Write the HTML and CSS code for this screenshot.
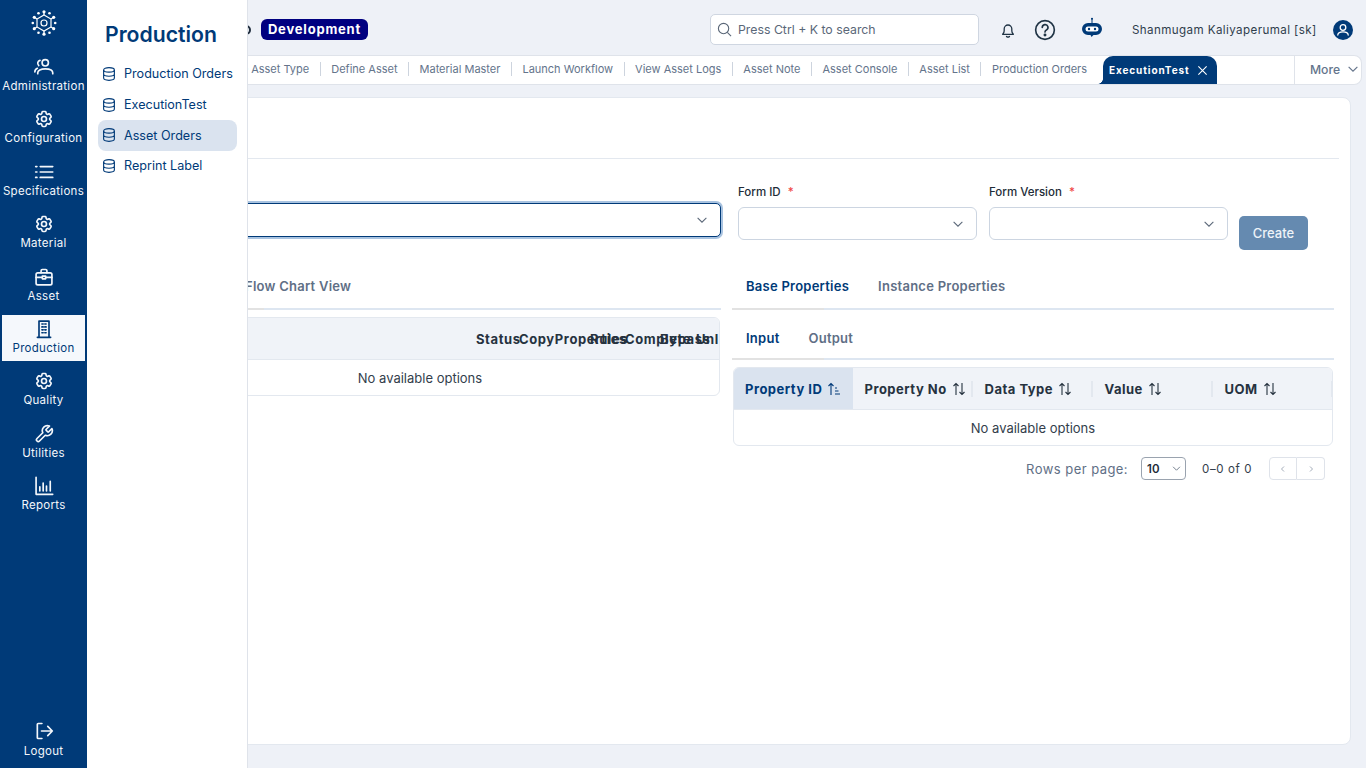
FILE: index.html
```html
<!DOCTYPE html>
<html lang="en">
<head>
<meta charset="utf-8">
<title>Asset Orders</title>
<link rel="stylesheet" href="styles.css">
</head>
<body>
<svg class="sprite" aria-hidden="true">
  <symbol id="gear" viewBox="0 0 24 24"><path d="M9.594 3.94c.09-.542.56-.94 1.11-.94h2.593c.55 0 1.02.398 1.11.94l.213 1.281c.063.374.313.686.645.87.074.04.147.083.22.127.325.196.72.257 1.075.124l1.217-.456a1.125 1.125 0 0 1 1.37.49l1.296 2.247a1.125 1.125 0 0 1-.26 1.431l-1.003.827c-.293.241-.438.613-.43.992a7.723 7.723 0 0 1 0 .255c-.008.378.137.75.43.991l1.004.827c.424.35.534.955.26 1.43l-1.298 2.247a1.125 1.125 0 0 1-1.369.491l-1.217-.456c-.355-.133-.75-.072-1.076.124a6.47 6.47 0 0 1-.22.128c-.331.183-.581.495-.644.869l-.213 1.281c-.09.543-.56.94-1.11.94h-2.594c-.55 0-1.019-.398-1.11-.94l-.213-1.281c-.062-.374-.312-.686-.644-.87a6.52 6.52 0 0 1-.22-.127c-.325-.196-.72-.257-1.076-.124l-1.217.456a1.125 1.125 0 0 1-1.369-.49l-1.297-2.247a1.125 1.125 0 0 1 .26-1.431l1.004-.827c.292-.24.437-.613.43-.991a6.932 6.932 0 0 1 0-.255c.007-.38-.138-.751-.43-.992l-1.004-.827a1.125 1.125 0 0 1-.26-1.43l1.297-2.247a1.125 1.125 0 0 1 1.37-.491l1.216.456c.356.133.751.072 1.076-.124.072-.044.146-.086.22-.128.332-.183.582-.495.644-.869l.214-1.28Z"/><circle cx="12" cy="12" r="3"/></symbol>
  <symbol id="users" viewBox="0 0 24 24"><circle cx="13.500" cy="7" r="3.800"/><path d="M4.500 20v-1c0-3 3.500-4.800 9-4.800s9 1.800 9 4.800v1"/><path d="M7.200 4a3.600 3.600 0 0 0-1.500 6.200"/><path d="M1 18c0-2.200 1-3.700 3-4.500"/></symbol>
  <symbol id="list" viewBox="0 0 24 24"><path d="M7.500 5.500h15M7.500 12h15M7.500 18.500h15M2 5.500h1.500M2 12h1.500M2 18.500h1.500"/></symbol>
  <symbol id="case" viewBox="0 0 24 24"><rect x="2.500" y="7" width="19" height="14.500" rx="2"/><path d="M8.500 7V4.500a1.500 1.500 0 0 1 1.500-1.500h4a1.500 1.500 0 0 1 1.500 1.500V7M2.500 12.500h7.500M14 12.500h7.500"/><rect x="10" y="11" width="4" height="3.200"/></symbol>
  <symbol id="building" viewBox="0 0 24 24"><path d="M6 22V2.500h12V22M4 22h16"/><path d="M9.500 6h1.500M13 6h1.500M9.500 9.500h1.500M13 9.500h1.500M9.500 13h1.500M13 13h1.500M9.500 16.500h1.500M13 16.500h1.500"/></symbol>
  <symbol id="tool" viewBox="0 0 24 24"><path d="M14.700 6.300a1 1 0 0 0 0 1.400l1.600 1.600a1 1 0 0 0 1.400 0l3.770-3.770a6 6 0 0 1-7.940 7.940l-6.910 6.910a2.120 2.120 0 0 1-3-3l6.910-6.910a6 6 0 0 1 7.940-7.940l-3.760 3.760z"/></symbol>
  <symbol id="chart" viewBox="0 0 24 24"><path d="M2.500 1.500v20.500h20M7 18v-5M11 18V8.500M15 18v-6M19.500 18V6.500"/></symbol>
  <symbol id="logout" viewBox="0 0 24 24"><path d="M9.500 3H5a1 1 0 0 0-1 1v16a1 1 0 0 0 1 1h4.500M9 12h13M16.500 6.500L22 12l-5.500 5.500"/></symbol>
  <symbol id="db" viewBox="2.500 1 19 22"><ellipse cx="12" cy="5.500" rx="8.500" ry="3.500"/><path d="M3.500 5.500v13c0 1.900 3.800 3.500 8.500 3.500s8.500-1.600 8.500-3.500v-13M3.500 12c0 1.900 3.800 3.500 8.500 3.500s8.500-1.600 8.500-3.500"/></symbol>
  <symbol id="chev" viewBox="0 0 16 16"><path d="M3 5.500l5 5 5-5"/></symbol>
  <symbol id="sort" viewBox="0 0 14 14"><path d="M4 13V1.500M1.500 4L4 1.500 6.500 4M10 1v11.500M7.500 10l2.500 2.500 2.500-2.500"/></symbol>
</svg>

<nav class="rail">
  <svg class="logo" viewBox="0 0 26 26">
    <g class="logo-dots">
      <circle cx="13" cy="1.800" r="1.600"/><circle cx="18.500" cy="3.300" r="1.300"/><circle cx="22.700" cy="7.300" r="1.600"/><circle cx="24.200" cy="13" r="1.300"/><circle cx="22.700" cy="18.700" r="1.600"/><circle cx="18.500" cy="22.700" r="1.300"/><circle cx="13" cy="24.200" r="1.600"/><circle cx="7.500" cy="22.700" r="1.300"/><circle cx="3.300" cy="18.700" r="1.600"/><circle cx="1.800" cy="13" r="1.300"/><circle cx="3.300" cy="7.300" r="1.600"/><circle cx="7.500" cy="3.300" r="1.300"/>
    </g>
    <g class="logo-lines">
      <path d="M13 5l7 4v8l-7 4-7-4V9z"/><circle cx="13" cy="13" r="3"/><path d="M13 2v3M22.700 7.300L20 9M22.700 18.700L20 17M13 24v-3M3.300 18.700L6 17M3.300 7.300L6 9"/>
    </g>
  </svg>
  <ul class="rail-list">
    <li class="rail-item"><svg class="rail-ic"><use href="#users"/></svg><span>Administration</span></li>
    <li class="rail-item"><svg class="rail-ic"><use href="#gear"/></svg><span>Configuration</span></li>
    <li class="rail-item"><svg class="rail-ic"><use href="#list"/></svg><span>Specifications</span></li>
    <li class="rail-item"><svg class="rail-ic"><use href="#gear"/></svg><span>Material</span></li>
    <li class="rail-item"><svg class="rail-ic"><use href="#case"/></svg><span>Asset</span></li>
    <li class="rail-item is-active"><svg class="rail-ic"><use href="#building"/></svg><span>Production</span></li>
    <li class="rail-item"><svg class="rail-ic"><use href="#gear"/></svg><span>Quality</span></li>
    <li class="rail-item"><svg class="rail-ic"><use href="#tool"/></svg><span>Utilities</span></li>
    <li class="rail-item"><svg class="rail-ic"><use href="#chart"/></svg><span>Reports</span></li>
  </ul>
  <div class="rail-item rail-logout"><svg class="rail-ic"><use href="#logout"/></svg><span>Logout</span></div>
</nav>

<aside class="submenu">
  <h2 class="submenu-title">Production</h2>
  <ul class="submenu-list">
    <li class="submenu-item"><svg class="db-ic"><use href="#db"/></svg>Production Orders</li>
    <li class="submenu-item"><svg class="db-ic"><use href="#db"/></svg>ExecutionTest</li>
    <li class="submenu-item is-active"><svg class="db-ic"><use href="#db"/></svg>Asset Orders</li>
    <li class="submenu-item"><svg class="db-ic"><use href="#db"/></svg>Reprint Label</li>
  </ul>
</aside>

<div class="main">
  <header class="topbar">
    <span class="brand-mark"></span>
    <span class="env-badge">Development</span>
    <div class="search">
      <svg class="search-ic" viewBox="0 0 16 16"><circle cx="7" cy="7" r="5.500"/><path d="M11 11l4 4"/></svg>
      <span>Press Ctrl + K to search</span>
    </div>
    <svg class="top-ic bell" viewBox="0 0 18 18"><path d="M4.200 12.500c.7-.8 1-1.500 1-3V7.800a3.800 3.800 0 0 1 7.600 0v1.700c0 1.500.3 2.200 1 3l.6.8H3.600z"/><path d="M7.500 15.500c.8.700 2.200.700 3 0"/></svg>
    <svg class="top-ic help" viewBox="0 0 20 20"><circle cx="10" cy="10" r="8.500"/><path d="M7.500 7.700a2.600 2.600 0 1 1 3.800 2.300c-.9.500-1.300 1-1.300 1.900"/><circle class="fill-dot" cx="10" cy="14.600" r=".6"/></svg>
    <svg class="bot" viewBox="0 0 22 22"><path class="bot-ant" d="M11 1v5"/><circle class="bot-fill" cx="11" cy="1.800" r="1"/><path class="bot-fill" d="M7 6h8a6 6 0 0 1 0 12h-2.500l-2 2-1-2H7a6 6 0 0 1 0-12z"/><rect class="bot-eyes" x="4.500" y="9.500" width="13" height="5" rx="2.500"/><circle class="bot-fill" cx="8" cy="12" r="1.200"/><circle class="bot-fill" cx="14" cy="12" r="1.200"/></svg>
    <span class="user-name">Shanmugam Kaliyaperumal [sk]</span>
    <span class="avatar"><svg viewBox="0 0 20 20"><circle cx="10" cy="7.500" r="2.800"/><path d="M4.800 15c0-2.200 2.100-3.200 5.200-3.200s5.200 1 5.200 3.200"/></svg></span>
  </header>

  <div class="tabbar">
    <div class="tabs">
      <span class="tab">Define Asset Type</span>
      <span class="tab">Define Asset</span>
      <span class="tab">Material Master</span>
      <span class="tab">Launch Workflow</span>
      <span class="tab">View Asset Logs</span>
      <span class="tab">Asset Note</span>
      <span class="tab">Asset Console</span>
      <span class="tab">Asset List</span>
      <span class="tab tab-last">Production Orders</span>
      <span class="tab-active">ExecutionTest<svg class="close" viewBox="0 0 12 12"><path d="M1.500 1.500l9 9M10.500 1.500l-9 9"/></svg></span>
    </div>
    <div class="more">More<svg class="more-chev"><use href="#chev"/></svg></div>
  </div>

  <section class="card">
    <div class="card-head"></div>
    <div class="form-row">
      <div class="field field-main">
        <div class="control control-focus"><svg class="chev"><use href="#chev"/></svg></div>
      </div>
      <div class="field field-form-id">
        <label class="label">Form ID <b>*</b></label>
        <div class="control"><svg class="chev"><use href="#chev"/></svg></div>
      </div>
      <div class="field field-form-ver">
        <label class="label">Form Version <b>*</b></label>
        <div class="control"><svg class="chev"><use href="#chev"/></svg></div>
      </div>
      <button class="create" type="button">Create</button>
    </div>

    <div class="columns">
      <div class="col">
        <div class="ptabs ptabs-left"><span class="ptab">Flow Chart View</span></div>
        <div class="tbl tbl-left">
          <div class="left-head">
            <span>Status</span><span>CopyProperties</span><span>Rules</span><span>Complete</span><span>Bypass</span><span>Unlock</span>
          </div>
          <div class="tbl-empty">No available options</div>
        </div>
      </div>
      <div class="col">
        <div class="ptabs"><span class="ptab is-active">Base Properties</span><span class="ptab">Instance Properties</span></div>
        <div class="ptabs ptabs-sub"><span class="ptab is-active">Input</span><span class="ptab">Output</span></div>
        <div class="tbl">
          <div class="right-head">
            <div class="th th-active">Property ID<svg class="sort-ic" viewBox="0 0 14 14"><path d="M4 13V1.500M1.500 4L4 1.500 6.500 4M8 6h2M8 9h3.500M8 12h5"/></svg></div>
            <div class="th">Property No<svg class="sort-ic"><use href="#sort"/></svg></div>
            <div class="th">Data Type<svg class="sort-ic"><use href="#sort"/></svg></div>
            <div class="th">Value<svg class="sort-ic"><use href="#sort"/></svg></div>
            <div class="th">UOM<svg class="sort-ic"><use href="#sort"/></svg></div>
          </div>
          <div class="tbl-empty">No available options</div>
        </div>
        <div class="pager">
          <span class="pager-label">Rows per page:</span>
          <span class="pager-select">10<svg class="pager-chev"><use href="#chev"/></svg></span>
          <span class="pager-count">0–0 of 0</span>
          <span class="pager-btns">
            <span class="pager-btn"><svg viewBox="0 0 10 10"><path d="M6 2.500L3.500 5 6 7.500"/></svg></span>
            <span class="pager-btn"><svg viewBox="0 0 10 10"><path d="M4 2.500L6.500 5 4 7.500"/></svg></span>
          </span>
        </div>
      </div>
    </div>
  </section>
</div>
</body>
</html>
```
FILE: styles.css
```css
* { box-sizing: border-box; }
html, body { margin: 0; height: 100%; }
body {
  display: flex;
  height: 768px;
  overflow: hidden;
  background: #eef1f7;
  font-family: Inter, "Noto Sans", sans-serif;
  color: #1f2d3d;
}
ul { list-style: none; margin: 0; padding: 0; }
.sprite { display: none; }

/* rail */
.rail {
  flex: 0 0 87px;
  height: 768px;
  background: #003a78;
  display: flex;
  flex-direction: column;
  align-items: center;
}
.logo { width: 26px; height: 26px; margin-top: 10px; }
.logo-dots circle { fill: #fff; }
.logo-lines { fill: none; stroke: #fff; stroke-width: 1.200; }
.rail-list {
  display: flex;
  flex-direction: column;
  gap: 6.400px;
  margin-top: 17px;
  width: 83px;
}
.rail-item {
  height: 46px;
  display: flex;
  flex-direction: column;
  align-items: center;
  padding-top: 4px;
  color: #f4f7fb;
  font-size: 11.500px;
  letter-spacing: .3px;
  line-height: 18px;
  white-space: nowrap;
}
.rail-item.is-active { background: #f5f8fc; color: #003a78; }
.rail-ic {
  width: 20px;
  height: 20px;
  fill: none;
  stroke: currentColor;
  stroke-width: 2;
  stroke-linecap: round;
  stroke-linejoin: round;
}
.rail-logout { margin-top: auto; margin-bottom: 5px; width: 83px; padding-top: 4px; }
.rail-logout span { margin-top: 1px; }

/* submenu overlay */
.submenu {
  position: absolute;
  left: 87px;
  top: 0;
  bottom: 0;
  width: 161px;
  background: #fff;
  border-right: 1px solid #dfe3ea;
  padding: 18px 10px 0 11px;
  z-index: 5;
}
.submenu-title {
  margin: 0 0 7.500px 7px;
  font-size: 21.200px;
  line-height: 33px;
  font-weight: 600;
  color: #003a78;
}
.submenu-item {
  height: 30.700px;
  border-radius: 8px;
  display: flex;
  align-items: center;
  gap: 9px;
  padding-left: 5px;
  font-size: 12.600px;
  color: #003a78;
  white-space: nowrap;
}
.submenu-item.is-active { background: #dae3ef; }
.db-ic {
  width: 12px;
  height: 14px;
  fill: none;
  stroke: currentColor;
  stroke-width: 1.800;
  flex: none;
}

/* main */
.main { flex: 1; min-width: 0; display: flex; flex-direction: column; }
.topbar {
  height: 55px;
  padding-top: 4px;
  display: flex;
  align-items: center;
  flex: none;
}
.brand-mark {
  width: 10px;
  height: 10px;
  border-radius: 50%;
  border: 2px solid #1f2d3d;
  margin-left: 154px;
}
.env-badge {
  margin-left: 10px;
  width: 107px;
  height: 21px;
  border-radius: 6px;
  background: #000080;
  color: #fff;
  font-size: 13px;
  font-weight: 700;
  letter-spacing: .8px;
  line-height: 21px;
  text-align: center;
}
.search {
  margin-left: 342px;
  width: 269px;
  height: 31px;
  background: #fff;
  border: 1px solid #cfd6e1;
  border-radius: 5px;
  display: flex;
  align-items: center;
  padding-left: 6px;
  gap: 6px;
  font-size: 12.300px;
  color: #5a6778;
}
.search-ic { width: 15px; height: 15px; fill: none; stroke: #5a6778; stroke-width: 1.200; }
.top-ic { fill: none; stroke: #1f3344; stroke-width: 1.300; stroke-linecap: round; stroke-linejoin: round; }
.bell { width: 18px; height: 18px; margin-left: 20px; }
.help { width: 22px; height: 22px; margin-left: 17px; stroke-width: 1.500; }
.fill-dot { fill: #1f3344; }
.bot { width: 22px; height: 22px; margin-left: 25px; margin-top: -3px; fill: none; }
.bot-ant { stroke: #003a78; stroke-width: 1; }
.bot-fill { fill: #003a78; }
.bot-eyes { fill: #fff; }
.user-name {
  margin-left: 29px;
  font-size: 11.600px;
  letter-spacing: .4px;
  color: #2f3d4c;
  white-space: nowrap;
}
.avatar {
  margin-left: 16px;
  width: 20px;
  height: 20px;
  border-radius: 50%;
  background: #003a78;
  display: flex;
  flex: none;
}
.avatar svg { width: 20px; height: 20px; fill: none; stroke: #fff; stroke-width: 1.300; stroke-linecap: round; }

/* tab bar */
.tabbar {
  height: 30px;
  margin-right: 4px;
  background: #fff;
  border: 1px solid #dfe3ea;
  border-left: 0;
  border-radius: 0 8px 8px 0;
  display: flex;
  flex: none;
}
.tabs {
  flex: 1;
  min-width: 0;
  display: flex;
  justify-content: flex-end;
  align-items: center;
  padding-right: 77px;
  overflow: hidden;
  height: 28px;
}
.tab {
  flex: none;
  margin-top: -2px;
  font-size: 11px;
  line-height: 14px;
  color: #64748b;
  padding: 0 10.500px;
  border-right: 1px solid #cdd4de;
  white-space: nowrap;
}
.tab-last { border-right: 0; padding-right: 16px; }
.tab-active {
  position: relative;
  flex: none;
  width: 114px;
  height: 28px;
  background: #003a78;
  border-radius: 10px 10px 0 0;
  color: #fff;
  font-size: 10px;
  font-weight: 700;
  letter-spacing: .9px;
  display: flex;
  align-items: center;
  padding-left: 6px;
}
.tab-active::before {
  content: "";
  position: absolute;
  left: -5px;
  bottom: 0;
  width: 5px;
  height: 5px;
  background: radial-gradient(circle at 0 0, transparent 4.500px, #003a78 5px);
}
.close { width: 11px; height: 11px; margin-left: auto; margin-right: 9px; fill: none; stroke: #fff; stroke-width: 1.200; }
.more {
  flex: 0 0 67px;
  border-left: 1px solid #dfe3ea;
  display: flex;
  align-items: center;
  padding: 0 0 2px 15px;
  font-size: 12.200px;
  font-weight: 500;
  color: #64748b;
}
.more-chev { width: 14px; height: 14px; margin-left: 6px; fill: none; stroke: #64748b; stroke-width: 1.300; }

/* card */
.card {
  margin: 12px 15px 23px 15px;
  flex: 1;
  background: #fff;
  border: 1px solid #e3e8ef;
  border-radius: 8px;
  padding: 0 16px;
}
.card-head {
  height: 61px;
  margin-right: -5px;
  border-bottom: 1px solid #e3e8ef;
}
.form-row {
  display: flex;
  align-items: flex-start;
  height: 107px;
}
.field-main { width: 602px; padding-top: 44px; }
.field-form-id { width: 239px; margin-left: 17px; padding-top: 24px; }
.field-form-ver { width: 239px; margin-left: 12px; padding-top: 24px; }
.label {
  display: block;
  height: 18px;
  margin-bottom: 6px;
  font-size: 11.500px;
  line-height: 18px;
  font-weight: 500;
  color: #222c38;
}
.label b { color: #ef4444; margin-left: 4px; font-weight: 500; }
.control {
  height: 33px;
  background: #fff;
  border: 1px solid #ccd5e1;
  border-radius: 6px;
  display: flex;
  align-items: center;
  justify-content: flex-end;
  padding-right: 11px;
}
.control-focus {
  height: 34px;
  border: 1px solid #003a78;
  box-shadow: 0 0 0 2px #a9c3e0;
  border-radius: 5px;
  padding-right: 11px;
}
.chev { width: 14px; height: 14px; fill: none; stroke: #5a6778; stroke-width: 1.200; }
.create {
  margin: 57px 0 0 11px;
  width: 69px;
  height: 34px;
  background: #658ab0;
  border: 0;
  border-radius: 5px;
  color: #eef3f8;
  font: 500 13px Inter, "Noto Sans", sans-serif;
}

.columns { display: grid; grid-template-columns: 602px 602px; gap: 11px; }
.ptabs {
  height: 44px;
  display: flex;
  align-items: center;
  gap: 29px;
  padding: 0 14px 2px;
  border-bottom: 2px solid #dde6f1;
  border-image: linear-gradient(to right, #e2e2e2 93px, #dde6f1 93px) 2;
}
.ptabs-left { padding-left: 126px; border-image: linear-gradient(to right, #e2e2e2 146px, #dde6f1 146px) 2; }
.ptabs-sub { height: 50px; padding-top: 7px; padding-bottom: 0; }
.ptab { font-size: 13px; font-weight: 600; letter-spacing: .25px; color: #5f6f86; white-space: nowrap; }
.ptab.is-active { color: #003a78; }
.tbl {
  margin: 7px 1px 0;
  border: 1px solid #e3e8ef;
  border-radius: 6px;
  overflow: hidden;
}
.tbl-empty {
  height: 35px;
  display: flex;
  align-items: center;
  justify-content: center;
  font-size: 13px;
  color: #333e4c;
}
.left-head {
  height: 42px;
  background: #f0f3f8;
  border-bottom: 1px solid #e3e8ef;
  display: grid;
  grid-template-columns: 355px 43px 71px 35px 35px 36px 24px;
  align-items: center;
  font-size: 13px;
  font-weight: 700;
  letter-spacing: .6px;
  color: #26323f;
  white-space: nowrap;
}
.left-head span:first-child { grid-column: 2; }
.right-head {
  height: 42px;
  background: #f0f3f8;
  border-bottom: 1px solid #e3e8ef;
  display: grid;
  grid-template-columns: 119px 120px 120px 120px 120px;
  align-items: stretch;
}
.th {
  position: relative;
  display: flex;
  align-items: center;
  gap: 5px;
  padding-left: 11.500px;
  font-size: 13px;
  font-weight: 700;
  letter-spacing: .5px;
  color: #26323f;
  white-space: nowrap;
}
.th::after {
  content: "";
  position: absolute;
  right: 0;
  top: 13px;
  height: 16px;
  width: 2px;
  background: #e3e8ef;
}
.th-active { background: #dae3ef; color: #003a78; padding-left: 11px; }
.th-active::after { display: none; }
.sort-ic { width: 14px; height: 14px; flex: none; fill: none; stroke: currentColor; stroke-width: 1.100; }
.pager {
  display: flex;
  align-items: center;
  justify-content: flex-end;
  height: 23px;
  margin-top: 11px;
  padding-right: 9px;
  font-size: 13px;
  letter-spacing: .45px;
  color: #5f6f86;
}
.pager-select {
  margin-left: 13px;
  width: 45px;
  height: 23px;
  border: 1px solid #9aa3af;
  border-radius: 4px;
  display: flex;
  align-items: center;
  padding-left: 5px;
  font-size: 11.500px;
  font-weight: 600;
  letter-spacing: 0;
  color: #222c38;
}
.pager-chev { width: 11px; height: 11px; margin-left: auto; margin-right: 3px; fill: none; stroke: #5a6778; stroke-width: 1.200; }
.pager-count { margin-left: 16px; font-size: 11.500px; color: #333e4c; letter-spacing: .6px; }
.pager-btns { display: flex; margin-left: 17px; }
.pager-btn {
  width: 28px;
  height: 23px;
  border: 1px solid #dfe3ea;
  display: flex;
  align-items: center;
  justify-content: center;
}
.pager-btn:first-child { border-radius: 4px 0 0 4px; }
.pager-btn:last-child { border-left: 0; border-radius: 0 4px 4px 0; }
.pager-btn svg { width: 10px; height: 10px; fill: none; stroke: #a4adba; stroke-width: 1; }
```
